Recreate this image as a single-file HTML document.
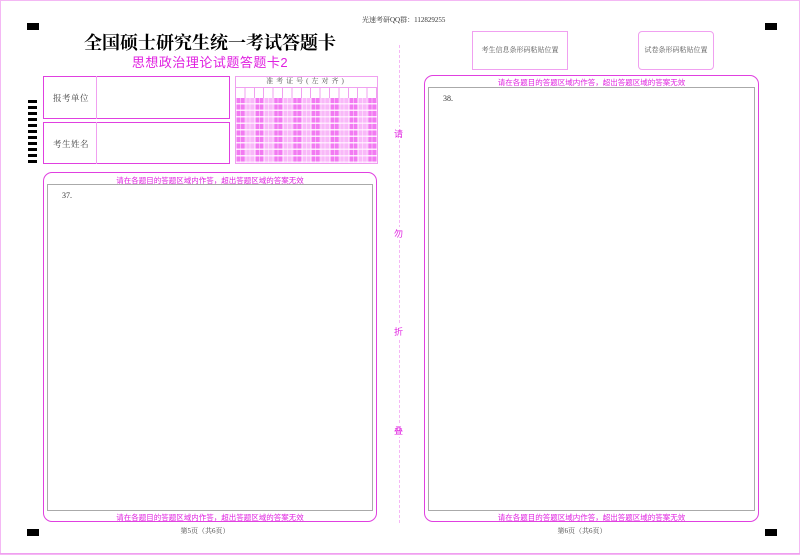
<!DOCTYPE html>
<html><head><meta charset="utf-8">
<style>
*{margin:0;padding:0;box-sizing:border-box}
body{width:800px;height:555px;background:#fff;position:relative;overflow:hidden;font-family:"Liberation Serif","Noto Serif CJK SC",serif}
.a{position:absolute}
.blk{position:absolute;background:#000}
.mg{color:#e020e0}
.sans{font-family:"Liberation Sans","Noto Sans CJK SC",sans-serif}
</style></head><body>
<div class="a" style="left:0;top:0;width:800px;height:555px;border:1px solid #f4b8f4"></div>
<div class="a" style="left:0;top:553px;width:800px;height:1px;background:#f0a0f0"></div>

<div class="blk" style="left:27px;top:23px;width:12px;height:7px"></div>
<div class="blk" style="left:765px;top:23px;width:12px;height:7px"></div>
<div class="blk" style="left:27px;top:529px;width:12px;height:7px"></div>
<div class="blk" style="left:765px;top:529px;width:12px;height:7px"></div>
<div class="a" style="left:28px;top:100px;width:9px;height:63px;background:repeating-linear-gradient(#000 0 3px,#fff 3px 6px)"></div>

<div class="a" style="left:362px;top:15px;font-size:7px;color:#333;white-space:nowrap">光速考研QQ群：112829255</div>

<div class="a" style="left:60px;top:29px;width:300px;text-align:center;font-size:18px;font-weight:bold;white-space:nowrap;color:#000">全国硕士研究生统一考试答题卡</div>
<div class="a mg sans" style="left:110px;top:52px;width:200px;text-align:center;font-size:13px;letter-spacing:0.5px;white-space:nowrap">思想政治理论试题答题卡2</div>

<div class="a" style="left:43px;top:76px;width:187px;height:43px;border:1.5px solid #e040e0"></div>
<div class="a" style="left:96px;top:76px;width:1px;height:43px;background:#f0a0f0"></div>
<div class="a" style="left:53px;top:92px;font-size:8.5px;color:#444;letter-spacing:0.5px;white-space:nowrap">报考单位</div>
<div class="a" style="left:43px;top:122px;width:187px;height:42px;border:1.5px solid #e040e0"></div>
<div class="a" style="left:96px;top:122px;width:1px;height:42px;background:#f0a0f0"></div>
<div class="a" style="left:53px;top:138px;font-size:8.5px;color:#444;letter-spacing:0.5px;white-space:nowrap">考生姓名</div>

<div class="a" style="left:235px;top:76px;width:143px;height:88px;border:1px solid #f0a0f0"></div>
<div class="a" style="left:235px;top:76px;width:143px;height:11px;text-align:center;font-size:7px;color:#555;letter-spacing:3px;line-height:11px;white-space:nowrap">准考证号(左对齐)</div>
<div class="a" style="left:236px;top:87px;width:141px;height:11px;border-top:1px solid #f0a0f0;background:repeating-linear-gradient(90deg,#fff 0 8.4px,#f0a0f0 8.4px 9.4px)"></div>
<div class="a" style="left:236px;top:98px;width:141px;height:65px;background:repeating-linear-gradient(90deg,#f27af2 0 9.4px,#f9b8f9 9.4px 18.8px)"></div>
<div class="a" style="left:236px;top:98px;width:141px;height:65px;background:repeating-linear-gradient(#ffffff00 0 5px,#ffe6ff 5px 6.5px)"></div>
<div class="a" style="left:236px;top:98px;width:141px;height:65px;background:repeating-linear-gradient(90deg,#fff 0 1px,#ffffff00 1px 4px,#fff 4px 5px,#ffffff00 5px 8.4px,#fff 8.4px 9.4px);opacity:.45"></div>

<div class="a" style="left:43px;top:172px;width:334px;height:350px;border:1.5px solid #e040e0;border-radius:9px"></div>
<div class="a mg sans" style="left:43px;top:175px;width:334px;text-align:center;font-size:7.5px;white-space:nowrap">请在各题目的答题区域内作答，超出答题区域的答案无效</div>
<div class="a" style="left:47px;top:184px;width:326px;height:327px;border:1px solid #aaa"></div>
<div class="a" style="left:62px;top:191px;font-size:8px;color:#333">37.</div>
<div class="a mg sans" style="left:43px;top:512px;width:334px;text-align:center;font-size:7.5px;white-space:nowrap">请在各题目的答题区域内作答，超出答题区域的答案无效</div>
<div class="a" style="left:160px;top:526px;width:90px;text-align:center;font-size:7px;color:#444;white-space:nowrap">第5页（共6页）</div>

<div class="a" style="left:399px;top:45px;width:0;height:478px;border-left:1px dashed #f6b6f6"></div>
<div class="a mg sans" style="left:394px;top:127px;font-size:9px;background:#fff">请</div>
<div class="a mg sans" style="left:394px;top:227px;font-size:9px;background:#fff">勿</div>
<div class="a mg sans" style="left:394px;top:325px;font-size:9px;background:#fff">折</div>
<div class="a mg sans" style="left:394px;top:424px;font-size:9px;background:#fff">叠</div>

<div class="a" style="left:472px;top:31px;width:96px;height:39px;border:1px solid #f0a0f0;font-size:7px;color:#555;text-align:center;line-height:37px;white-space:nowrap">考生信息条形码粘贴位置</div>
<div class="a" style="left:638px;top:31px;width:76px;height:39px;border:1px solid #f0a0f0;border-radius:4px;font-size:7px;color:#555;text-align:center;line-height:37px;white-space:nowrap">试卷条形码粘贴位置</div>

<div class="a" style="left:424px;top:75px;width:335px;height:447px;border:1.5px solid #e040e0;border-radius:9px"></div>
<div class="a mg sans" style="left:424px;top:77px;width:335px;text-align:center;font-size:7.5px;white-space:nowrap">请在各题目的答题区域内作答，超出答题区域的答案无效</div>
<div class="a" style="left:428px;top:87px;width:327px;height:424px;border:1px solid #aaa"></div>
<div class="a" style="left:443px;top:94px;font-size:8px;color:#333">38.</div>
<div class="a mg sans" style="left:424px;top:512px;width:335px;text-align:center;font-size:7.5px;white-space:nowrap">请在各题目的答题区域内作答，超出答题区域的答案无效</div>
<div class="a" style="left:537px;top:526px;width:90px;text-align:center;font-size:7px;color:#444;white-space:nowrap">第6页（共6页）</div>
</body></html>
